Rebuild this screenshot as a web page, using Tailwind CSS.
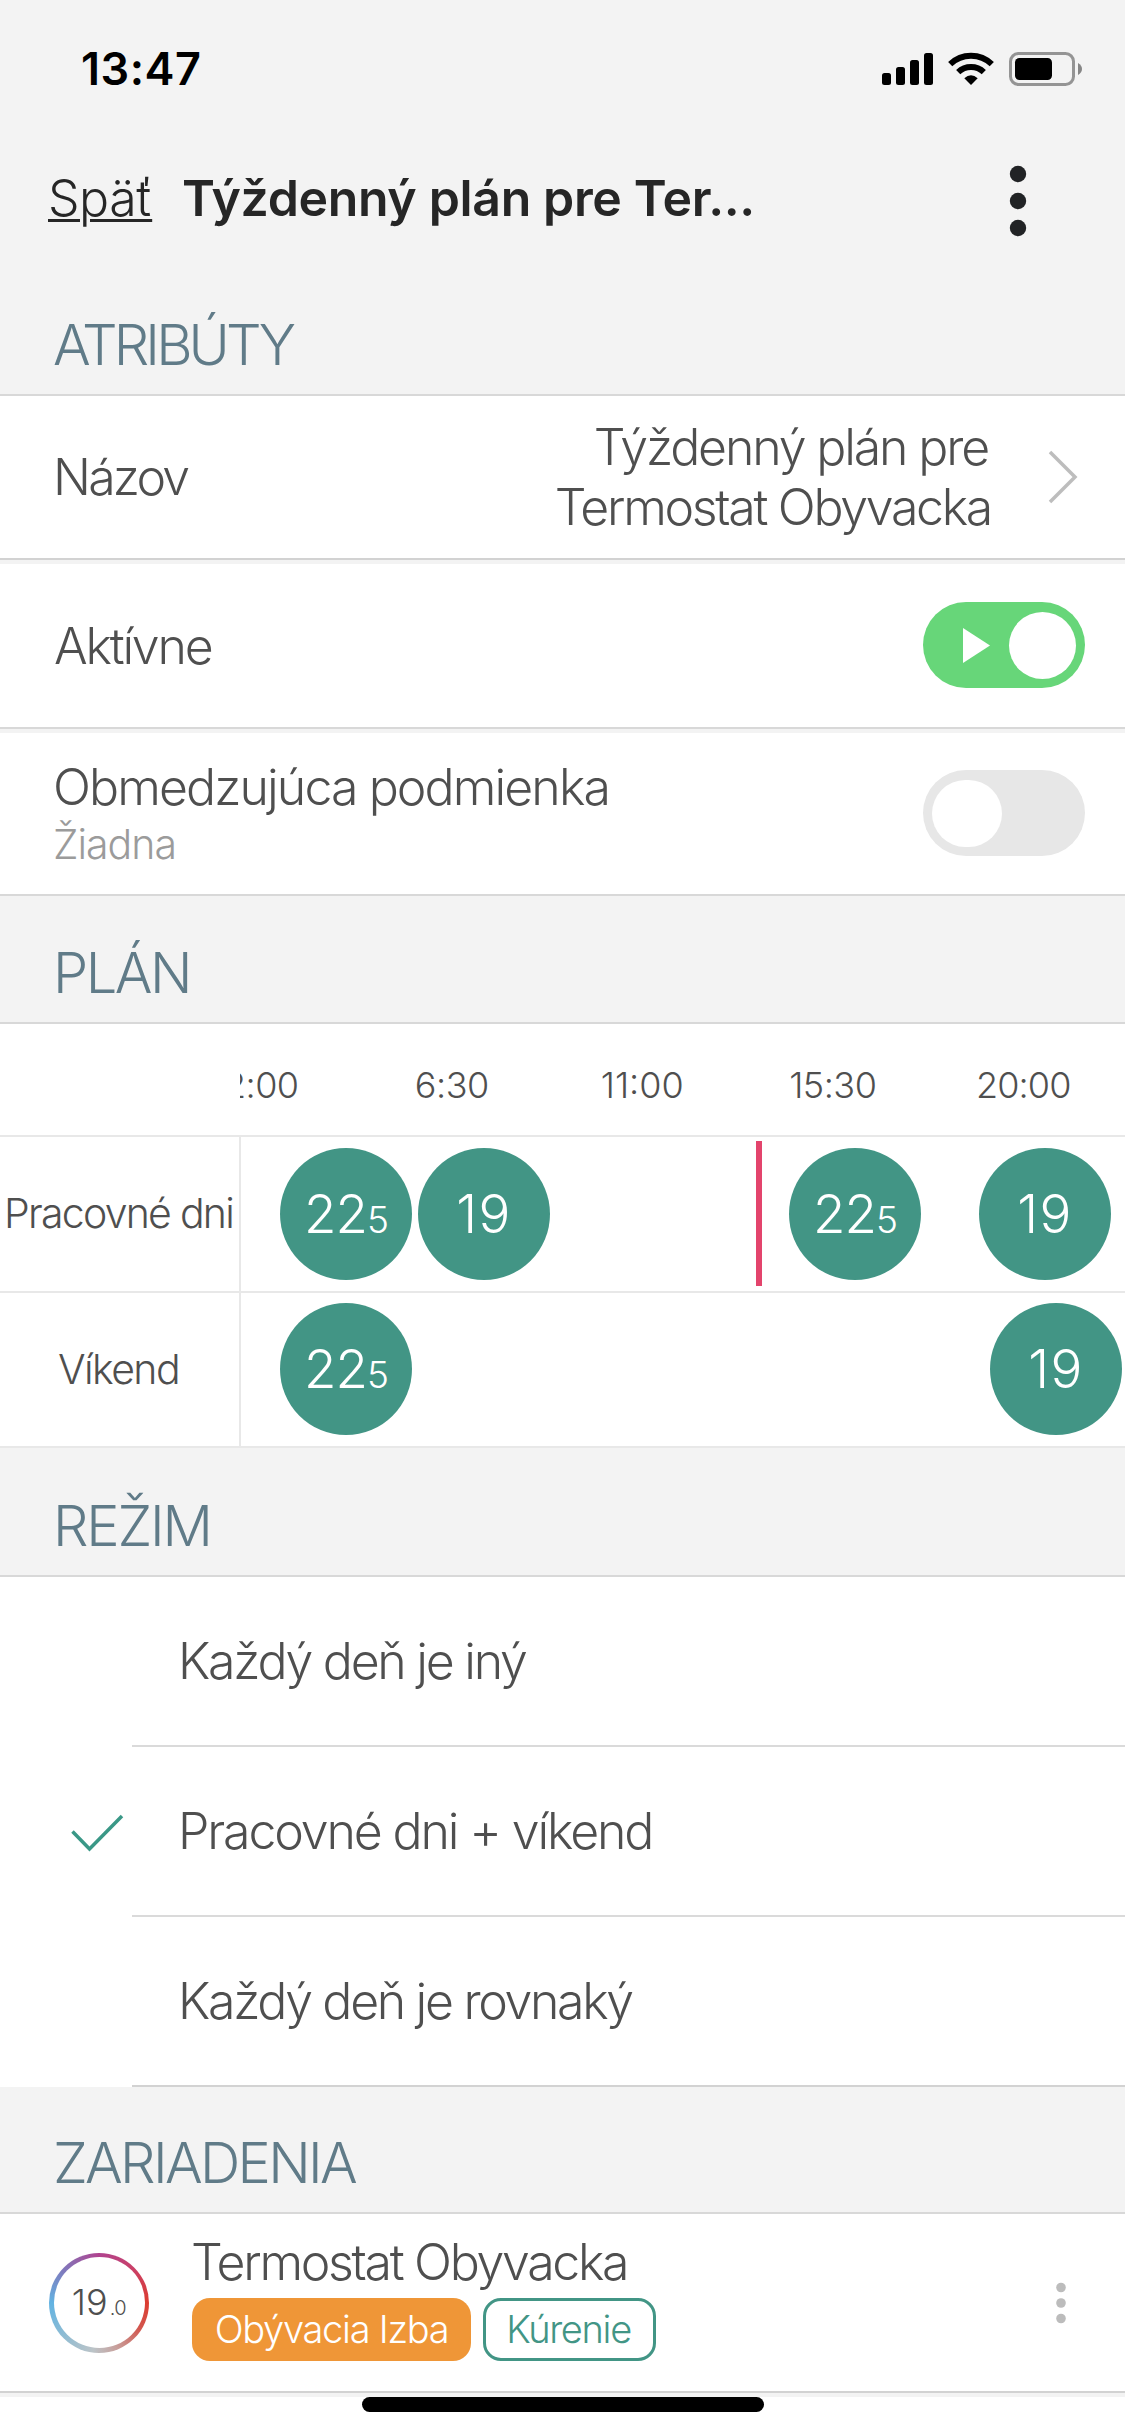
<!DOCTYPE html>
<html lang="sk">
<head>
  <meta charset="UTF-8" />
  <meta name="viewport" content="width=device-width, initial-scale=1.0" />
  <title>Týždenný plán</title>
  <script src="https://cdn.jsdelivr.net/npm/@tailwindcss/browser@4"></script>
</head>
<body class="bg-white font-['Inter','Liberation_Sans',sans-serif] font-light text-[#4f4f4f]">
<div class="w-[1125px] h-[2436px] relative overflow-hidden flex flex-col text-[50px] leading-[60px] whitespace-nowrap">

  <!-- Status bar -->
  <div class="h-[137px] bg-[#f3f3f3] flex items-center justify-between pl-[81px] pr-[42px] shrink-0">
    <span class="text-[45px] font-semibold text-black tracking-[0.5px]">13:47</span>
    <svg class="w-[203px] h-[36px]" viewBox="880 51 203 36" fill="none">
      <g fill="#000">
        <rect x="882" y="73" width="9" height="12" rx="2.5" />
        <rect x="896" y="67" width="9" height="18" rx="2.5" />
        <rect x="910" y="60" width="9" height="25" rx="2.5" />
        <rect x="924" y="53" width="9" height="32" rx="2.5" />
        <path d="M971 85 L964.3 78.3 Q971 72 977.7 78.3 Z" />
      </g>
      <path d="M950.2 64.2 A30 30 0 0 1 991.8 64.2" stroke="#000" stroke-width="6" />
      <path d="M958.2 72.2 A18.5 18.5 0 0 1 983.8 72.2" stroke="#000" stroke-width="6" />
      <rect x="1010.5" y="53.5" width="63" height="31" rx="8" stroke="#949494" stroke-width="3" />
      <rect x="1015" y="58" width="37" height="22" rx="4.5" fill="#000" />
      <path d="M1078 63 Q1082 65.5 1082 69 Q1082 72.5 1078 75 Z" fill="#868686" />
    </svg>
  </div>

  <!-- Header -->
  <div class="h-[124px] bg-[#f3f3f3] flex items-center pl-12 pr-[98px] pb-0.5 text-[#262626] shrink-0">
    <span class="w-[134px] font-[340] underline decoration-[3px] underline-offset-[3px] tracking-[-0.5px]">Späť</span>
    <span class="font-semibold tracking-[-0.35px]">Týždenný plán pre Ter...</span>
    <svg class="w-[18px] h-[72px] ml-auto mt-1.5" viewBox="0 0 18 72" fill="#212325">
      <circle cx="9" cy="9" r="8.2" />
      <circle cx="9" cy="36" r="8.2" />
      <circle cx="9" cy="63" r="8.2" />
    </svg>
  </div>

  <!-- Atribúty -->
  <div class="h-[135px] bg-[#f3f3f3] border-b-2 border-[#d8d8d8] flex items-end pl-[53px] pb-[21px] text-[56px] leading-[56px] tracking-[-3.9px] text-[#607b88] shrink-0">ATRIBÚTY</div>
  <div class="h-[164px] border-b-2 border-[#d2d2d2] flex items-center pl-[53px] pr-[47px] shrink-0">
    <span class="tracking-[-2.8px]">Názov</span>
    <div class="ml-auto text-right">
      <div class="tracking-[-2.15px] pr-[3px]">Týždenný plán pre</div>
      <div class="tracking-[-2.3px]">Termostat Obyvacka</div>
    </div>
    <svg class="w-[30px] h-[54px] ml-[57px]" viewBox="0 0 30 54" fill="none" stroke="#bdbdbd" stroke-width="3.5">
      <path d="M2 2 L27 27 L2 52" />
    </svg>
  </div>
  <div class="h-1 bg-[#f3f3f3] shrink-0"></div>
  <div class="h-[165px] border-b-2 border-[#d8d8d8] flex items-center justify-between pl-[54px] pr-10 shrink-0">
    <span class="tracking-[-2.2px]">Aktívne</span>
    <div class="w-[162px] h-[86px] rounded-full bg-[#67d679] flex items-center justify-between pl-10 pr-[9px] mb-px">
      <svg class="w-[27px] h-[35px]" viewBox="0 0 27 35" fill="#fff"><path d="M0 0 L27 17.5 L0 35 Z" /></svg>
      <div class="size-[67px] rounded-full bg-white"></div>
    </div>
  </div>
  <div class="h-1 bg-[#f3f3f3] shrink-0"></div>
  <div class="h-[163px] border-b-2 border-[#d8d8d8] flex items-center justify-between pl-[53px] pr-10 shrink-0">
    <div>
      <div class="tracking-[-1.9px]">Obmedzujúca podmienka</div>
      <div class="text-[41px] leading-[54px] tracking-[-1px] text-[#9b9b9b]">Žiadna</div>
    </div>
    <div class="w-[162px] h-[86px] rounded-full bg-[#e7e7e7] flex items-center pl-[9px] mb-px">
      <div class="w-[70px] h-[67px] rounded-full bg-white"></div>
    </div>
  </div>

  <!-- Plán -->
  <div class="h-32 bg-[#f3f3f3] border-b-2 border-[#d8d8d8] flex items-end pl-[53px] pb-[21px] text-[56px] leading-[56px] tracking-[-2.5px] text-[#607b88] shrink-0">PLÁN</div>
  <div class="h-[113px] border-b-2 border-[#e8e8e8] pl-60 shrink-0">
    <div class="h-full overflow-hidden flex items-center pt-[10px] text-[36px] text-center tracking-[-0.5px]">
      <span class="w-[190.5px] -ml-[74px] shrink-0">2:00</span>
      <span class="w-[190.5px] shrink-0">6:30</span>
      <span class="w-[190.5px] shrink-0 tracking-normal">11:00</span>
      <span class="w-[190.5px] shrink-0">15:30</span>
      <span class="w-[190.5px] shrink-0 tracking-[-0.9px]">20:00</span>
    </div>
  </div>
  <div class="h-[156px] border-b-2 border-[#e8e8e8] flex shrink-0">
    <div class="w-[241px] border-r-2 border-[#e8e8e8] flex items-center justify-center text-[41px] tracking-[-1.75px] pb-0.5 pr-0.5">Pracovné dni</div>
    <div class="relative grow leading-[132px] text-[53px] text-white">
      <div class="absolute left-[39px] top-[11px] size-[132px] rounded-full bg-[#429585] text-center tracking-[-1px]">22<span class="text-[37px]">5</span></div>
      <div class="absolute left-[177px] top-[11px] size-[132px] rounded-full bg-[#429585] text-center tracking-[1.5px]">19</div>
      <div class="absolute left-[515px] top-[4px] w-[6px] h-[145px] bg-[#e3446c]"></div>
      <div class="absolute left-[548px] top-[11px] size-[132px] rounded-full bg-[#429585] text-center tracking-[-1px]">22<span class="text-[37px]">5</span></div>
      <div class="absolute left-[738px] top-[11px] size-[132px] rounded-full bg-[#429585] text-center tracking-[1.5px]">19</div>
    </div>
  </div>
  <div class="h-[155px] border-b-2 border-[#e8e8e8] flex shrink-0">
    <div class="w-[241px] border-r-2 border-[#e8e8e8] flex items-center justify-center text-[41px] tracking-[-1.56px] pb-0.5 pr-0.5">Víkend</div>
    <div class="relative grow leading-[132px] text-[53px] text-white">
      <div class="absolute left-[39px] top-[10px] size-[132px] rounded-full bg-[#429585] text-center tracking-[-1px]">22<span class="text-[37px]">5</span></div>
      <div class="absolute left-[749px] top-[10px] size-[132px] rounded-full bg-[#429585] text-center tracking-[1.5px]">19</div>
    </div>
  </div>

  <!-- Režim -->
  <div class="h-[129px] bg-[#f3f3f3] border-b-2 border-[#d8d8d8] flex items-end pl-[53px] pb-[21px] text-[56px] leading-[56px] tracking-[-2.2px] text-[#607b88] shrink-0">REŽIM</div>
  <div class="h-[170px] flex shrink-0">
    <div class="w-[132px]"></div>
    <div class="grow border-b-2 border-[#dadada] flex items-center pl-[46px] tracking-[-2.26px]">Každý deň je iný</div>
  </div>
  <div class="h-[170px] flex shrink-0">
    <div class="w-[132px] flex items-center pl-[71px]">
      <svg class="w-[53px] h-[38px] mt-0.5" viewBox="0 0 53 38" fill="none" stroke="#3a9887" stroke-width="3.5">
        <path d="M1.5 17.5 L18.5 35 L51 2" />
      </svg>
    </div>
    <div class="grow border-b-2 border-[#dadada] flex items-center pl-[46px] tracking-[-2.13px]">Pracovné dni + víkend</div>
  </div>
  <div class="h-[170px] flex shrink-0">
    <div class="w-[132px]"></div>
    <div class="grow border-b-2 border-[#d2d2d2] flex items-center pl-[46px] tracking-[-2.33px]">Každý deň je rovnaký</div>
  </div>

  <!-- Zariadenia -->
  <div class="h-[127px] bg-[#f3f3f3] border-b-2 border-[#d8d8d8] flex items-end pl-[53px] pb-[21px] text-[56px] leading-[56px] tracking-[-2.7px] text-[#607b88] shrink-0">ZARIADENIA</div>
  <div class="h-[179px] border-b-2 border-[#d2d2d2] flex items-center pl-[49px] pr-[58px] shrink-0">
    <div class="size-[100px] rounded-full p-[4.5px] bg-[conic-gradient(#b0438f,#c9406a_12%,#dc3c30_25%,#d2574f_34%,#c8a09c_44%,#bcc4c8_52%,#8fbcd3_63%,#62b3e2_75%,#8078bc_87%,#b0438f)]">
      <div class="size-full rounded-full bg-white flex items-baseline justify-center text-[36px] leading-[91px]">19<span class="text-[20px] tracking-[-0.5px] pl-0.5">.0</span></div>
    </div>
    <div class="ml-[42px] pb-3">
      <div class="tracking-[-2.3px]">Termostat Obyvacka</div>
      <div class="flex gap-3 mt-1.5 ml-px text-[38px]">
        <span class="w-[279px] h-[63px] rounded-[18px] bg-[#ef9637] text-white text-center leading-[63px] tracking-[-1.27px]">Obývacia Izba</span>
        <span class="w-[173px] h-[63px] rounded-[18px] border-3 border-[#429585] text-[#429585] text-center leading-[57px] tracking-[-1.33px] pr-0.5">Kúrenie</span>
      </div>
    </div>
    <svg class="w-3 h-[42px] ml-auto" viewBox="0 0 12 42" fill="#bcbcbc">
      <circle cx="6" cy="5.5" r="4.8" />
      <circle cx="6" cy="21" r="4.8" />
      <circle cx="6" cy="36.5" r="4.8" />
    </svg>
  </div>
  <div class="h-1 bg-[#f3f3f3] shrink-0"></div>

  <!-- Home indicator -->
  <div class="w-[402px] h-[15px] rounded-full bg-black mx-auto shrink-0"></div>
</div>
</body>
</html>
